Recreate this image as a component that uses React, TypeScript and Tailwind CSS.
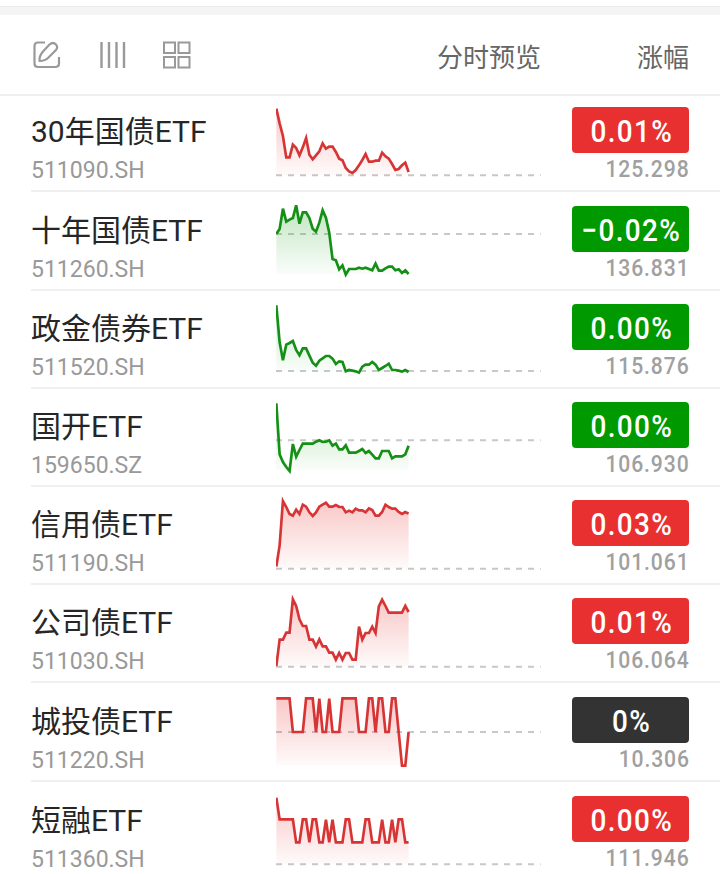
import React from 'react';

type Trend = 'up' | 'down' | 'flat';

interface Fund {
  name: string;
  code: string;
  change: string;
  price: string;
  trend: Trend;
  line: 'red' | 'green';
  height: string;
  base: number;
  bottom: number;
  points: number[];
}

// points, base and bottom are in sparkline units, 3 units per pixel
const funds: Fund[] = [
  {
    name: '30年国债ETF', code: '511090.SH', change: '0.01%', price: '125.298', trend: 'up', line: 'red', height: 'h-[96px]', base: 245, bottom: 245,
    points: [45, 89, 127, 191, 191, 153, 163, 185, 161, 133, 183, 197, 185, 173, 149, 165, 159, 159, 175, 195, 200, 223, 233, 238, 229, 215, 199, 181, 204, 204, 201, 201, 177, 188, 195, 211, 229, 226, 215, 207, 235],
  },
  {
    name: '十年国债ETF', code: '511260.SH', change: '−0.02%', price: '136.831', trend: 'down', line: 'green', height: 'h-[99px]', base: 124, bottom: 245,
    points: [124, 109, 48, 87, 81, 76, 38, 93, 59, 59, 76, 108, 117, 90, 53, 75, 120, 199, 203, 230, 218, 246, 229, 229, 229, 225, 228, 225, 229, 233, 213, 234, 234, 227, 222, 222, 233, 230, 241, 233, 244],
  },
  {
    name: '政金债券ETF', code: '511520.SH', change: '0.00%', price: '115.876', trend: 'down', line: 'green', height: 'h-[98px]', base: 241, bottom: 241,
    points: [44, 155, 209, 162, 157, 151, 178, 194, 173, 173, 195, 216, 225, 210, 203, 196, 196, 204, 220, 212, 214, 242, 238, 240, 242, 246, 228, 222, 222, 214, 222, 238, 232, 226, 219, 238, 238, 240, 243, 238, 244],
  },
  {
    name: '国开ETF', code: '159650.SZ', change: '0.00%', price: '106.930', trend: 'down', line: 'green', height: 'h-[98px]', base: 155, bottom: 245,
    points: [44, 197, 220, 235, 247, 166, 204, 184, 165, 165, 165, 165, 159, 155, 160, 159, 155, 171, 165, 182, 182, 170, 192, 192, 192, 187, 181, 193, 187, 198, 209, 209, 187, 187, 187, 209, 203, 203, 203, 197, 171],
  },
  {
    name: '信用债ETF', code: '511190.SH', change: '0.03%', price: '101.061', trend: 'up', line: 'red', height: 'h-[98px]', base: 246, bottom: 246,
    points: [240, 176, 43, 61, 82, 87, 69, 82, 54, 60, 77, 88, 77, 60, 54, 48, 60, 60, 55, 61, 61, 77, 72, 77, 66, 71, 71, 77, 65, 70, 87, 87, 76, 54, 61, 66, 66, 76, 82, 76, 81],
  },
  {
    name: '公司债ETF', code: '511030.SH', change: '0.01%', price: '106.064', trend: 'up', line: 'red', height: 'h-[98px]', base: 246, bottom: 246,
    points: [244, 165, 165, 144, 144, 44, 64, 104, 124, 124, 165, 165, 186, 164, 185, 185, 204, 204, 225, 205, 225, 205, 205, 225, 225, 126, 165, 145, 145, 126, 145, 65, 45, 64, 84, 84, 84, 84, 84, 64, 82],
  },
  {
    name: '城投债ETF', code: '511220.SH', change: '0%', price: '10.306', trend: 'flat', line: 'red', height: 'h-[99px]', base: 145, bottom: 246,
    points: [44, 44, 44, 44, 44, 145, 145, 145, 145, 44, 44, 44, 145, 45, 145, 145, 45, 145, 145, 145, 44, 44, 44, 44, 44, 145, 145, 145, 44, 44, 145, 44, 44, 145, 145, 44, 44, 145, 246, 246, 145],
  },
  {
    name: '短融ETF', code: '511360.SH', change: '0.00%', price: '111.946', trend: 'up', line: 'red', height: 'h-[99px]', base: 245, bottom: 245,
    points: [45, 110, 110, 110, 110, 110, 179, 179, 110, 110, 179, 110, 110, 179, 179, 111, 179, 111, 179, 179, 179, 110, 110, 179, 179, 179, 179, 110, 110, 179, 179, 179, 111, 179, 179, 111, 179, 110, 110, 179, 179],
  },
];

const badgeColors: Record<Trend, string> = {
  up: 'bg-[#e93030]',
  down: 'bg-[#009900]',
  flat: 'bg-[#333333]',
};

const Sparkline: React.FC<{ fund: Fund }> = ({ fund }) => {
  const color = fund.line === 'red' ? '#d73535' : '#159016';
  const fill = fund.line === 'red' ? '#e93030' : '#18a018';
  const path = fund.points.map((y, i) => `${(i * 9.92 + 1).toFixed(1)},${y}`).join(' ');
  const top = Math.min(...fund.points);
  const id = `fill-${fund.code}`;

  return (
    <svg width="266" height="94" viewBox="0 7 798 282" className="block shrink-0">
      <defs>
        <linearGradient id={id} gradientUnits="userSpaceOnUse" x1="0" y1={top} x2="0" y2={fund.bottom}>
          <stop offset="0" stopColor={fill} stopOpacity="0.27" />
          <stop offset="1" stopColor={fill} stopOpacity="0.02" />
        </linearGradient>
      </defs>
      <line x1="0" x2="794" y1={fund.base} y2={fund.base} stroke="#c8c8c8" strokeWidth="6" strokeDasharray="18 18" />
      <polygon points={`1,${fund.bottom} ${path} 398,${fund.bottom}`} fill={`url(#${id})`} />
      <polyline points={path} fill="none" stroke={color} strokeWidth="8" strokeLinejoin="miter" />
    </svg>
  );
};

const FundRow: React.FC<{ fund: Fund }> = ({ fund }) => (
  <div className={`${fund.height} ml-[31px] flex shrink-0 items-end border-b-2 border-[#f0f0f0] pr-[31px]`}>
    <div className="flex h-[80px] w-[245px] flex-col">
      <span className="h-[44px] whitespace-nowrap text-[30px] leading-[44px] text-[#262626]">{fund.name}</span>
      <span className="h-[32px] text-[23px] leading-[34px] text-[#999999]">{fund.code}</span>
    </div>
    <Sparkline fund={fund} />
    <div className="ml-auto flex h-[83px] w-[117px] flex-col items-end">
      <div className={`flex h-[46px] w-full items-center justify-center rounded-[4px] pt-[4px] text-[31px] leading-[42px] font-medium text-white ${badgeColors[fund.trend]}`}>
        <span className="inline-block scale-x-90 whitespace-nowrap pl-[2px] tracking-[1.5px]">{fund.change}</span>
      </div>
      <span className="mr-[-1px] inline-block origin-right scale-x-[0.88] text-[24px] leading-[33px] font-medium tracking-[1px] text-[#a0a0a0]">{fund.price}</span>
    </div>
  </div>
);

const Toolbar: React.FC = () => (
  <div className="flex h-[81px] shrink-0 items-center border-b-2 border-[#f0f0f0] pl-[32px] pr-[31px]">
    {/* Edit */}
    <svg width="30" height="30" viewBox="0 0 30 30" fill="none" stroke="#999" strokeWidth="2.200" strokeLinecap="butt">
      <path d="M13 2.500H6Q2.500 2.500 2.500 6V23.500Q2.500 27 6 27H23Q27 27 27 23.500V17" />
      <path d="M7.500 21Q7 16 11 11.500L17.500 4.500Q21 1.500 24 4.500Q26.500 7.500 23.500 10.500L16.500 17.500Q13 21 7.500 21Z" strokeLinejoin="round" />
    </svg>
    {/* Columns */}
    <svg className="ml-[37px]" width="28" height="30" viewBox="0 0 28 30" stroke="#999" strokeWidth="2.4">
      <path d="M2.500 2V28M10 2V28M17.500 2V28M25 2V28" />
    </svg>
    {/* Grid */}
    <svg className="ml-[35px]" width="30" height="30" viewBox="0 0 30 30" fill="none" stroke="#999" strokeWidth="2">
      <path d="M2 2.500H13V13H2ZM16.500 2.500H27.500V13H16.500ZM2 17H13V27.500H2ZM16.500 17H27.500V27.500H16.500Z" />
    </svg>
    <span className="ml-auto pt-[8px] text-[26px] text-[#666666]">分时预览</span>
    <span className="ml-[96px] pt-[8px] text-[26px] text-[#666666]">涨幅</span>
  </div>
);

export default function App() {
  return (
    <div className="flex h-[874px] w-[720px] flex-col overflow-hidden bg-white font-[Roboto,'Noto_Sans_CJK_SC',sans-serif]">
      <div className="mt-[6px] h-[9px] shrink-0 border-t border-[#eaeaea] bg-[#f4f4f4]" />
      <Toolbar />
      {funds.map((fund) => (
        <FundRow key={fund.code} fund={fund} />
      ))}
    </div>
  );
}
